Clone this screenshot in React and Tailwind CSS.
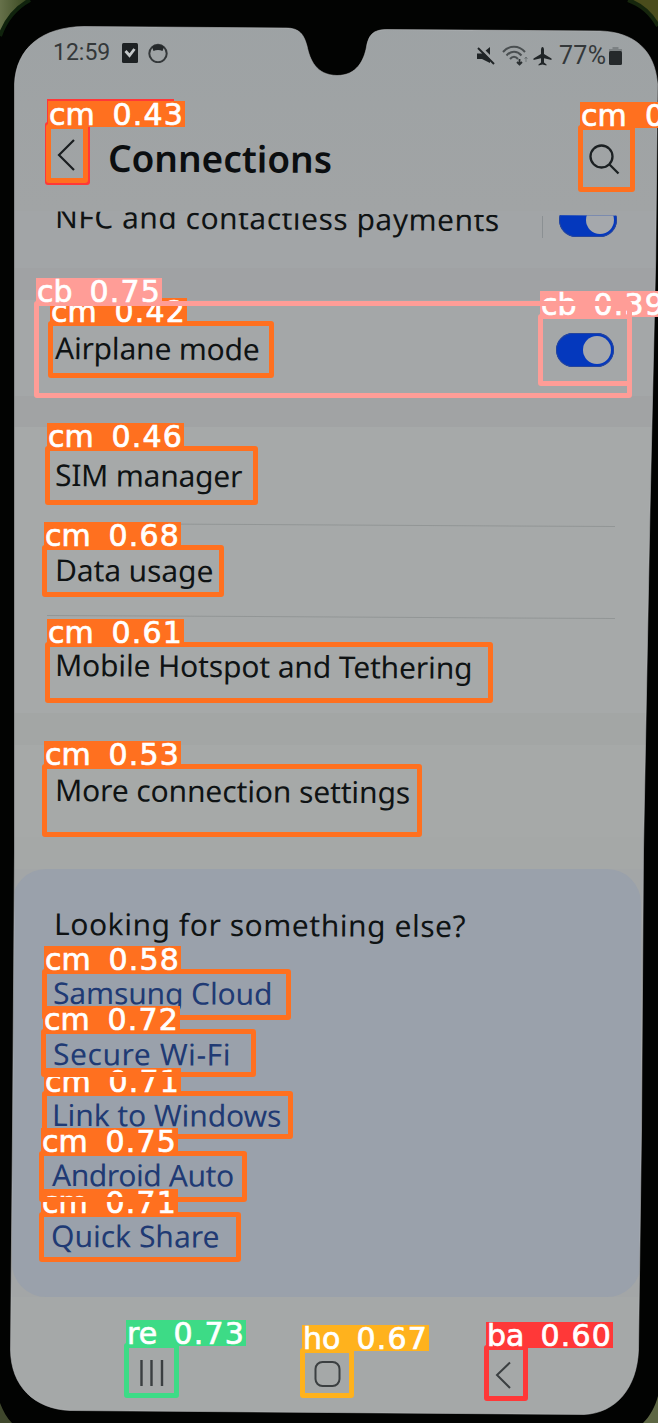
import React from "react";

const SCREEN =
  "M84 26.5 L286 28 C300 28 304 35 307 46 C310 60 316 75 337 75.500 C357 75.500 364 60 366.500 47 C368.500 35 373 29.500 387 29.500 L600 31 C634 32 655 50 657.500 84 L655.700 260 L650 510 L643.500 850 L641.500 1130 L638.500 1350 C637 1388 616 1413 584 1414.500 L70 1410.500 C34 1409 11 1386 10.500 1350 L12.500 1130 L14.500 850 L14.500 84 C16 48 42 27 84 26.500 Z";

function Bezel() {
  return (
    <svg className="pointer-events-none absolute inset-0" width="658" height="1423" viewBox="0 0 658 1423" fill="none">
      <defs>
        <linearGradient id="tl" x1="0" y1="0" x2="1" y2="0">
          <stop offset="0" stopColor="#66714a" />
          <stop offset="1" stopColor="#35441c" />
        </linearGradient>
      </defs>
      <path d={`M0 0H658V1423H0Z ${SCREEN}`} fill="#020302" fillRule="evenodd" />
      <path d="M0 0H30C17 7 6 19 0 36Z" fill="url(#tl)" />
      <path d="M0 36C6 19 17 7 30 0" stroke="#10230d" strokeWidth="4" />
      <path d="M628 0H658V26C651 13 642 5 628 0Z" fill="#4a4c1c" />
      <path d="M658 26C651 13 642 5 628 0" stroke="#16260d" strokeWidth="4" />
      <path d="M0 1403C3 1411 7 1418 12 1423H0Z" fill="#3f472c" />
      <path d="M658 1396C655 1407 650 1416 643 1423H658Z" fill="#5d6644" />
      <path d={SCREEN} stroke="#b9bcbd" strokeOpacity="0.55" strokeWidth="1" />
    </svg>
  );
}

function StatusBar() {
  return (
    <div className="flex h-[106px] items-start justify-between pl-[53px] pr-[35px] font-[Roboto] text-[#34383a]">
      <div className="flex h-[24px] translate-y-[41px] items-center">
        <span className="w-[69px] text-[23px] leading-6 tracking-[0px]">12:59</span>
        <svg width="16" height="20" viewBox="0 0 16 20">
          <rect width="16" height="20" rx="1.500" fill="#1d2123" />
          <path d="M3.500 8L7.500 12.500L12.500 6" stroke="#c3c7c9" strokeWidth="2.800" fill="none" />
        </svg>
        <svg className="ml-[10px]" width="20" height="20" viewBox="0 0 20 20" fill="none">
          <circle cx="10" cy="10.500" r="8.700" stroke="#34383a" strokeWidth="2" />
          <path d="M4 4C7 1 13 1 16 4L14.500 8C12 6.500 8 6.500 5.500 8Z" fill="#25292b" />
        </svg>
      </div>
      <div className="flex h-[24px] translate-y-[44px] items-center">
        <svg width="20" height="20" viewBox="0 0 20 20" fill="#1f2426">
          <path d="M1 7.500H6L14 1V17L6 13H1Z" />
          <path d="M3 0L19 16" stroke="#a0a4a6" strokeWidth="3" />
          <path d="M2 2L18 18" stroke="#1f2426" strokeWidth="2" />
        </svg>
        <svg className="ml-[6px]" width="27" height="22" viewBox="0 0 27 22" fill="none" stroke="#4a4f51" strokeWidth="2">
          <path d="M1 7C7 0 17 0 23 7" />
          <path d="M4.500 10.500C9 5.500 15 5.500 19.500 10.500" />
          <path d="M8 14C10.500 11 13.500 11 16 14" />
          <path d="M17.500 14V19M15 17L17.500 19.500L20 17" stroke="#2a2f31" strokeWidth="1.800" />
          <path d="M24 17V12M22.500 14L24 12L25.500 14" strokeWidth="1" strokeOpacity="0.5" />
        </svg>
        <svg className="ml-[4px]" width="19" height="19" viewBox="0 0 19 19" fill="#202527">
          <path d="M9.500 0C10.500 0 11 1.500 11 3V7L18.500 11.500V13L11 11.200V15.500L13.500 17.500V18.600L9.500 17.600L5.500 18.600V17.500L8 15.500V11.200L0.500 13V11.500L8 7V3C8 1.500 8.500 0 9.500 0Z" />
        </svg>
        <span className="ml-[7px] w-[51px] text-[25px] leading-6 tracking-[0.3px]">77%</span>
        <svg className="-translate-x-px" width="13" height="18" viewBox="0 0 13 18">
          <path d="M3.500 0H9.500V2H13V5H0V2H3.500Z" fill="#7c8183" />
          <rect y="4" width="13" height="14" rx="1.500" fill="#25292b" />
        </svg>
      </div>
    </div>
  );
}

function Header() {
  return (
    <header className="flex h-[105px] items-center pl-[57px] pr-[38px] text-[#0b0e10]">
      <svg className="-mt-[7px]" width="19" height="34" viewBox="0 0 19 34" fill="none">
        <path d="M17 2L2 17L17 32" stroke="#1a1e20" strokeWidth="2.200" />
      </svg>
      <h1 className="ml-[32px] grow rotate-[0.3deg] whitespace-nowrap text-[37px] font-semibold leading-[48px]">
        Connections
      </h1>
      <svg className="mt-[2px]" width="31" height="31" viewBox="0 0 31 31" fill="none" stroke="#1b2022" strokeWidth="2.300">
        <circle cx="12.500" cy="12.500" r="11" />
        <path d="M20.500 20.500L29.500 29.500" />
      </svg>
    </header>
  );
}

function Toggle() {
  return (
    <span className="flex h-[34px] w-[58px] shrink-0 items-center justify-end rounded-full bg-[#0438bd] pr-[3px] ring-1 ring-inset ring-[#26459c]">
      <span className="h-[28px] w-[28px] rounded-full bg-[#a5a8ac]" />
    </span>
  );
}

function Row({ label, className, children }) {
  return (
    <div className={`flex items-center justify-between pl-[55px] ${className}`}>
      <span className="origin-left rotate-[0.4deg] whitespace-nowrap">{label}</span>
      {children}
    </div>
  );
}

function Divider() {
  return <div className="ml-[47px] h-px w-[568px] origin-left rotate-[0.3deg] bg-[#929696]" />;
}

const LINKS = [
  ["Samsung Cloud", "-ml-px tracking-[-0.12px]"],
  ["Secure Wi-Fi", "-ml-px tracking-[0.55px]"],
  ["Link to Windows", "-ml-[2px] tracking-[-0.1px]"],
  ["Android Auto", "-ml-[2px] tracking-[-0.42px]"],
  ["Quick Share", "-ml-[3px] tracking-[0px]"],
];

/* Detections in ascending confidence, so the strongest is painted last. */
const ORANGE = ["border-[#ff701f]", "bg-[#ff701f]"];
const PINK = ["border-[#ff9d97]", "bg-[#ff9d97]"];
const RED = ["border-[#ff3838]", "bg-[#ff3838]"];
const GREEN = ["border-[#3ddb86]", "bg-[#3ddb86]"];
const AMBER = ["border-[#ffb21d]", "bg-[#ffb21d]"];
const DETECTIONS = [
  { c: RED, x: 45, y: 122, r: 90, b: 185, w: 127, t: "" },
  { c: PINK, x: 538, y: 314, r: 632, b: 386, w: 126, t: "cb 0.39" },
  { c: ORANGE, x: 578, y: 125, r: 635, b: 192, w: 137, t: "cm 0" },
  { c: ORANGE, x: 48, y: 321, r: 274, b: 378, w: 137, t: "cm 0.42" },
  { c: ORANGE, x: 46, y: 124, r: 88, b: 183, w: 137, t: "cm 0.43" },
  { c: ORANGE, x: 45, y: 446, r: 258, b: 505, w: 137, t: "cm 0.46" },
  { c: ORANGE, x: 42, y: 764, r: 422, b: 837, w: 137, t: "cm 0.53" },
  { c: ORANGE, x: 42, y: 969, r: 291, b: 1020, w: 137, t: "cm 0.58" },
  { c: RED, x: 484, y: 1345, r: 528, b: 1401, w: 127, t: "ba 0.60" },
  { c: ORANGE, x: 45, y: 642, r: 493, b: 703, w: 137, t: "cm 0.61" },
  { c: AMBER, x: 300, y: 1348, r: 354, b: 1398, w: 127, t: "ho 0.67" },
  { c: ORANGE, x: 42, y: 545, r: 224, b: 597, w: 137, t: "cm 0.68" },
  { c: ORANGE, x: 42, y: 1091, r: 293, b: 1139, w: 137, t: "cm 0.71" },
  { c: ORANGE, x: 39, y: 1212, r: 241, b: 1262, w: 137, t: "cm 0.71" },
  { c: ORANGE, x: 41, y: 1029, r: 256, b: 1077, w: 137, t: "cm 0.72" },
  { c: GREEN, x: 124, y: 1343, r: 179, b: 1398, w: 120, t: "re 0.73" },
  { c: ORANGE, x: 39, y: 1151, r: 247, b: 1202, w: 137, t: "cm 0.75" },
  { c: PINK, x: 34, y: 301, r: 632, b: 398, w: 126, t: "cb 0.75" },
];

function Detection({ c, x, y, r, b, w, t }) {
  const [name, score] = t.split(" ");
  return (
    <div
      className={`absolute rounded-[3px] border-[5px] ${c[0]}`}
      style={{ left: x, top: y, width: r - x, height: b - y }}
    >
      <div
        className={`absolute -left-[3px] -top-[28px] flex h-[26px] justify-between whitespace-nowrap pl-px pr-px font-['DejaVu_Sans'] text-[30px] leading-[28px] text-white [-webkit-text-stroke:0.7px_white] ${c[1]}`}
        style={{ width: w }}
      >
        <span>{name}</span>
        <span className={score === "0" ? "mr-[52px]" : "tracking-[1.2px]"}>{score}</span>
      </div>
    </div>
  );
}

export default function App() {
  return (
    <div className="relative h-[1423px] w-[658px] overflow-hidden bg-[#a3a6a7] font-['Noto_Sans',sans-serif] text-[30px] leading-[40px] text-[#0f1314]">
      <div className="bg-linear-to-b from-[#9da2a4] to-[#a1a4a5]">
        <StatusBar />
        <Header />
      </div>
      <div className="h-[57px] bg-[#a2a5a7]">
        <div className="h-[57px] overflow-hidden [clip-path:polygon(0_0,100%_5px,100%_100%,0_100%)]">
          <Row label="NFC and contactless payments" className="-mt-[14px] h-[40px] pr-[41px] tracking-[0.48px]">
            <span className="ml-auto mr-[16px] mt-[20px] h-[22px] w-px bg-[#8b9093]" />
            <span className="mt-[6px] flex">
              <Toggle />
            </span>
          </Row>
        </div>
      </div>
      <div className="h-[32px] bg-[#a0a2a4]" />
      <Row label="Airplane mode" className="h-[96px] bg-[#a4a7a8] pr-[44px] tracking-[-0.2px]">
        <span className="mt-[3px] flex">
          <Toggle />
        </span>
      </Row>
      <div className="h-[31px] bg-[#a1a3a4]" />
      <div className="bg-[#a6a9a9]">
        <Row label="SIM manager" className="h-[96px] tracking-[-0.22px]" />
        <Divider />
        <Row label="Data usage" className="h-[91px] tracking-[-0.1px]" />
        <Divider />
        <Row label="Mobile Hotspot and Tethering" className="h-[97px] tracking-[-0.14px]" />
      </div>
      <div className="h-[32px] bg-[#a3a6a5]" />
      <Row label="More connection settings" className="h-[92px] bg-[#a6a9a8] pb-[3px] tracking-[-0.12px]" />
      <div className="h-[32px] bg-[#a5a8a7]" />
      <section className="ml-[12px] mr-[17px] flex h-[428px] flex-col rounded-[34px] bg-[#9aa1ab] pl-[42px] pt-[35px]">
        <h2 className="mb-[18px] origin-left rotate-[0.3deg] whitespace-nowrap tracking-[0.54px]">Looking for something else?</h2>
        {LINKS.map(([label, fit]) => (
          <a key={label} className={`block h-[60.8px] origin-left rotate-[0.2deg] pt-[11px] text-[#203a74] ${fit}`}>
            {label}
          </a>
        ))}
      </section>
      <nav className="flex h-[125px] items-start bg-[#a5a8a8] pl-[139px] pt-[62px]">
        <svg width="25" height="28" viewBox="0 0 25 28" stroke="#3b3f41" strokeWidth="2.400">
          <path d="M2.500 1V27M12.500 1V27M23 1V27" />
        </svg>
        <svg className="ml-[150px] mt-px" width="27" height="28" viewBox="0 0 27 28" fill="none" stroke="#3b3f41" strokeWidth="2">
          <rect x="1.500" y="2" width="24" height="24" rx="7" />
        </svg>
        <svg className="ml-[154px] mt-[2px]" width="17" height="28" viewBox="0 0 17 28" fill="none" stroke="#3b3f41" strokeWidth="2">
          <path d="M15 1.500L2 14L15 27" />
        </svg>
      </nav>
      <Bezel />
      {DETECTIONS.map((d) => (
        <Detection key={`${d.x}-${d.y}`} {...d} />
      ))}
    </div>
  );
}
